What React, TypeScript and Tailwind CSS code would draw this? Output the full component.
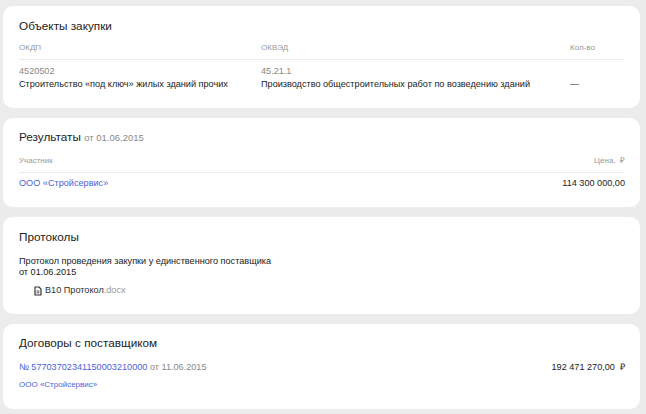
import React from "react";

function FileIcon() {
  return (
    <svg width="8" height="10" viewBox="0 0 8 10" fill="none" className="shrink-0">
      <path d="M1 1h4l2 2.2V9H1z" stroke="#333" strokeWidth="1.2" strokeLinejoin="round" />
      <path d="M2.6 5h2.8M2.6 6.8h2.8" stroke="#333" strokeWidth="0.9" />
    </svg>
  );
}

function Card({ className, children }: { className: string; children: React.ReactNode }) {
  return <section className={`bg-white rounded-[10px] pl-4 pr-[15px] shrink-0 ${className}`}>{children}</section>;
}

export default function App() {
  return (
    <div className="w-[646px] h-[414px] overflow-hidden bg-[#ececec] pl-[3px] pr-[6px] pt-[6px] text-[#333] font-['Liberation_Sans',Arial,sans-serif] flex flex-col gap-[10px]">
      {/* Объекты закупки */}
      <Card className="h-[102px] pt-3">
        <h2 className="text-[11.75px] leading-[16px] text-[#222]">Объекты закупки</h2>
        <div className="grid grid-cols-[242px_309px_1fr] mt-[9px] pb-[6px] border-b border-[#ececec] text-[8px] leading-[10px] text-[#999]">
          <div>ОКДП</div>
          <div>ОКВЭД</div>
          <div>Кол-во</div>
        </div>
        <div className="grid grid-cols-[242px_309px_1fr] mt-[4.5px] text-[9.15px] leading-[13.5px]">
          <div>
            <div className="text-[#888]">4520502</div>
            <div className="text-[#222]">Строительство «под ключ» жилых зданий прочих</div>
          </div>
          <div>
            <div className="text-[#888]">45.21.1</div>
            <div className="text-[#222]">Производство общестроительных работ по возведению зданий</div>
          </div>
          <div className="pt-[13.5px] text-[#222]">—</div>
        </div>
      </Card>

      {/* Результаты */}
      <Card className="h-[89px] pt-[11px]">
        <h2 className="text-[11.75px] leading-[16px] text-[#222]">
          Результаты <span className="text-[9.5px] text-[#888]">от 01.06.2015</span>
        </h2>
        <div className="flex justify-between mt-[10px] pb-[5.5px] border-b border-[#ececec] text-[8px] leading-[10px] text-[#999]">
          <div>Участник</div>
          <div>Цена, &nbsp;₽</div>
        </div>
        <div className="flex justify-between mt-[4.5px] text-[9.15px] leading-[13px]">
          <a className="text-[#4a63d8]">ООО «Стройсервис»</a>
          <div className="text-[#222]">114 300 000,00</div>
        </div>
      </Card>

      {/* Протоколы */}
      <Card className="h-[96.5px] pt-3">
        <h2 className="text-[11.75px] leading-[16px] text-[#222]">Протоколы</h2>
        <div className="mt-[10.5px] text-[9.15px] leading-[11.5px] text-[#222]">
          Протокол проведения закупки у единственного поставщика
          <br />
          от 01.06.2015
        </div>
        <div className="flex items-center gap-[3px] mt-[5.5px] ml-[15px] text-[9.15px] leading-[13px] text-[#333]">
          <FileIcon />
          <span>
            В10 Протокол<span className="text-[#999]">.docx</span>
          </span>
        </div>
      </Card>

      {/* Договоры */}
      <Card className="h-[85.5px] pt-[11.5px]">
        <h2 className="text-[11.75px] leading-[16px] text-[#222]">Договоры с поставщиком</h2>
        <div className="flex justify-between mt-[9.5px] text-[9.15px] leading-[13px]">
          <div>
            <a className="text-[#4a63d8]">№ 57703702341150003210000</a>{" "}
            <span className="text-[#888]">от 11.06.2015</span>
          </div>
          <div className="text-[#222]">192 471 270,00 &nbsp;₽</div>
        </div>
        <a className="block mt-[5px] text-[8px] leading-[11px] text-[#4a63d8]">ООО «Стройсервис»</a>
      </Card>
    </div>
  );
}
